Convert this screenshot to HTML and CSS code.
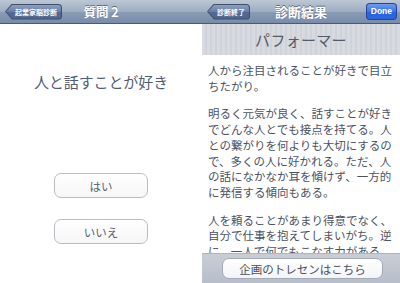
FILE: index.html
```html
<!DOCTYPE html>
<html lang="ja">
<head>
<meta charset="utf-8">
<link rel="stylesheet" href="styles.css">
</head>
<body>
<div class="screens">
  <section class="screen left">
    <header class="nav">
      <div class="back"><div class="back-in">起業家脳診断</div></div>
      <div class="nav-title">質問 2</div>
      <div></div>
    </header>
    <main class="question">
      <h1 class="q-text">人と話すことが好き</h1>
      <div class="answers">
        <button class="answer">はい</button>
        <button class="answer">いいえ</button>
      </div>
    </main>
  </section>
  <section class="screen right">
    <header class="nav">
      <div class="back"><div class="back-in">診断終了</div></div>
      <div class="nav-title">診断結果</div>
      <div class="done"><div class="done-in">Done</div></div>
    </header>
    <div class="band">パフォーマー</div>
    <div class="result">
      <p>人から注目されることが好きで目立ちたがり。</p>
      <p>明るく元気が良く、話すことが好きでどんな人とでも接点を持てる。人との繋がりを何よりも大切にするので、多くの人に好かれる。ただ、人の話になかなか耳を傾けず、一方的に発信する傾向もある。</p>
      <p>人を頼ることがあまり得意でなく、自分で仕事を抱えてしまいがち。逆に、一人で何でもこなす力がある。</p>
    </div>
    <footer class="toolbar">
      <button class="link-btn">企画のトレセンはこちら</button>
    </footer>
  </section>
</div>
</body>
</html>
```
FILE: styles.css
```css
html, body {
  margin: 0;
  padding: 0;
  background: #ffffff;
}
body {
  width: 400px;
  height: 283px;
  overflow: hidden;
  font-family: "Noto Sans CJK JP", "Liberation Sans", sans-serif;
}
.screens {
  display: flex;
  height: 283px;
}
.screen {
  display: flex;
  flex-direction: column;
  height: 283px;
  overflow: hidden;
  background: #ffffff;
}
.screen.left { width: 202px; }
.screen.right { width: 198px; }

.nav {
  height: 23px;
  flex: none;
  display: grid;
  grid-template-columns: 1fr auto 1fr;
  align-items: center;
  padding: 0 3px;
  background: linear-gradient(#bdc7d4 0%, #9eadc1 50%, #8a9cb5 51%, #788ca8 100%);
  border-bottom: 1px solid #4d5a6e;
}
.nav-title {
  color: #ffffff;
  font-weight: bold;
  font-size: 13px;
  line-height: 16px;
  text-shadow: 0 -1px 0 #5a6a82;
  white-space: nowrap;
}
.left .nav-title { font-size: 12.5px; }
.back {
  justify-self: start;
  background: #3e4e6c;
  padding: 1px;
  clip-path: polygon(0 50%, 7px 0, 100% 0, 100% 100%, 7px 100%);
  border-radius: 0 4px 4px 0;
  margin-left: 2px;
}
.back-in {
  height: 14px;
  line-height: 14px;
  padding: 0 4px 0 9px;
  color: #ffffff;
  font-size: 7px;
  font-weight: bold;
  white-space: nowrap;
  background: linear-gradient(#8ea0bf 0%, #667ca3 50%, #536a93 51%, #4f6690 100%);
  clip-path: polygon(0 50%, 6.5px 0, 100% 0, 100% 100%, 6.5px 100%);
  border-radius: 0 3px 3px 0;
}
.done {
  justify-self: end;
  background: #23449a;
  padding: 1px;
  border-radius: 4px;
}
.done-in {
  height: 15px;
  line-height: 15px;
  padding: 0 4px;
  font-family: "Liberation Sans", sans-serif;
  font-size: 8.5px;
  font-weight: bold;
  color: #ffffff;
  border-radius: 3px;
  background: linear-gradient(#6f9cf1 0%, #3b74e6 50%, #2a62db 51%, #2b66e0 100%);
}

/* left screen */
.question {
  flex: 1;
  display: flex;
  flex-direction: column;
  align-items: center;
}
.q-text {
  margin: 47px 0 0;
  font-size: 15px;
  font-weight: normal;
  line-height: 22px;
  color: #4f5e78;
  letter-spacing: -0.1px;
}
.answers {
  margin-top: 80px;
  display: flex;
  flex-direction: column;
  gap: 21px;
}
.answer {
  width: 94px;
  height: 25px;
  border: 1px solid #b9bcc2;
  border-radius: 7px;
  background: linear-gradient(#ffffff, #f6f6f7);
  font-family: "Noto Sans CJK JP", sans-serif;
  font-size: 11.5px;
  color: #5a6272;
  padding: 0;
}

/* right screen */
.band {
  height: 31px;
  flex: none;
  display: flex;
  align-items: center;
  justify-content: center;
  font-size: 15px;
  color: #555b66;
  letter-spacing: 0.3px;
  background: repeating-linear-gradient(90deg, #d7dadf 0px, #d7dadf 3px, #cfd3d9 3px, #cfd3d9 5px);
}
.result {
  flex: 1;
  overflow: hidden;
  padding: 0 7px 0 6px;
}
.result p {
  margin: 8px 0 12px;
  font-size: 11.5px;
  line-height: 15.7px;
  color: #4b5263;
}
.toolbar {
  height: 30px;
  flex: none;
  display: flex;
  align-items: center;
  justify-content: center;
  background: linear-gradient(#c9ced6, #b7bec9);
  border-top: 1px solid #aeb5c0;
  box-sizing: border-box;
}
.link-btn {
  width: 161px;
  height: 21px;
  margin-left: 3px;
  border: 1px solid #a4abb6;
  border-radius: 7px;
  background: linear-gradient(#ffffff, #f3f4f6);
  font-family: "Noto Sans CJK JP", sans-serif;
  font-size: 11.5px;
  color: #4a4f5a;
  padding: 0;
}
```
